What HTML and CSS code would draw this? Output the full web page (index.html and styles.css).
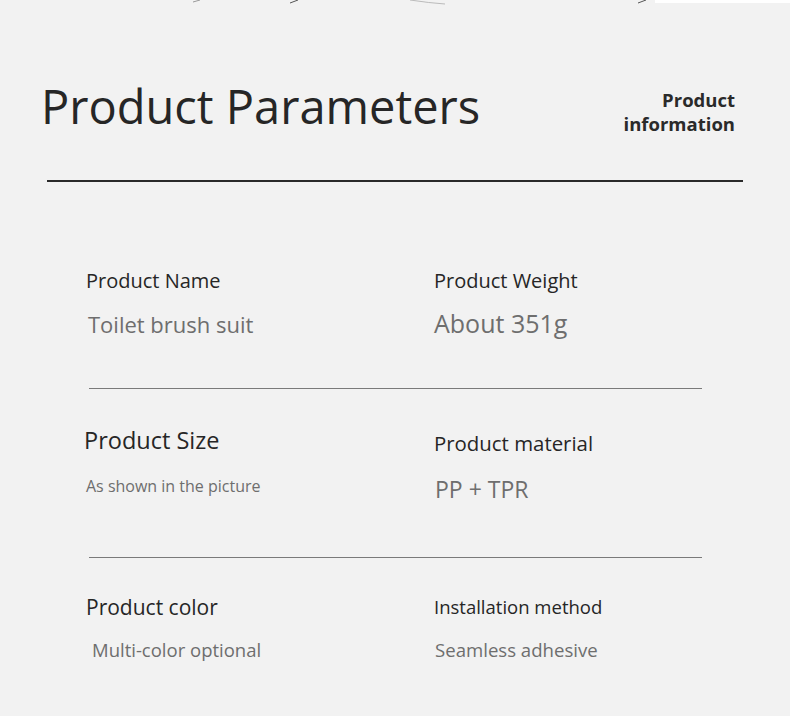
FILE: index.html
```html
<!DOCTYPE html>
<html>
<head>
<meta charset="utf-8">
<link rel="stylesheet" href="styles.css">
</head>
<body>
<div class="page">
  <svg class="topdeco" width="790" height="6" viewBox="0 0 790 6">
    <rect x="655" y="0" width="135" height="3" fill="#ffffff"/>
    <path d="M193 2 L200 0" stroke="#9a9a9a" stroke-width="1"/>
    <path d="M290 3 L298 0" stroke="#555" stroke-width="1"/>
    <path d="M410 0 Q430 3 445 4" stroke="#bbb" stroke-width="1" fill="none"/>
    <path d="M638 3 L646 0" stroke="#555" stroke-width="1"/>
  </svg>
  <header class="head">
    <h1 class="title">Product Parameters</h1>
    <div class="info">Product<br>information</div>
  </header>
  <div class="rule"></div>

  <section class="row row1">
    <div class="cell">
      <div class="label l-name">Product Name</div>
      <div class="value v-name">Toilet brush suit</div>
    </div>
    <div class="cell">
      <div class="label l-weight">Product Weight</div>
      <div class="value v-weight">About 351g</div>
    </div>
  </section>
  <div class="divider"></div>

  <section class="row row2">
    <div class="cell">
      <div class="label l-size">Product Size</div>
      <div class="value v-size">As shown in the picture</div>
    </div>
    <div class="cell">
      <div class="label l-material">Product material</div>
      <div class="value v-material">PP + TPR</div>
    </div>
  </section>
  <div class="divider"></div>

  <section class="row row3">
    <div class="cell">
      <div class="label l-color">Product color</div>
      <div class="value v-color">Multi-color optional</div>
    </div>
    <div class="cell">
      <div class="label l-install">Installation method</div>
      <div class="value v-install">Seamless adhesive</div>
    </div>
  </section>
</div>
</body>
</html>
```

FILE: styles.css
```css
* { box-sizing: border-box; margin: 0; padding: 0; }
html, body { background: #f2f2f2; }
body { font-family: "Open Sans", "Noto Sans", sans-serif; color: #262626; }
.page { position: relative; width: 790px; height: 716px; overflow: hidden; }
.topdeco { position: absolute; left: 0; top: 0; }

.head { display: flex; justify-content: space-between; align-items: flex-start; height: 131px; padding: 83px 55px 0 41px; }
.title { font-weight: 400; font-size: 47px; line-height: 47px; color: #262626; }
.info { margin-top: 5px; font-size: 18.5px; line-height: 24px; font-weight: 700; text-align: right; color: #2a2a2a; }

.rule { margin: 49px 47px 0 47px; height: 2px; background: #2a2a2a; }

.row { display: grid; grid-template-columns: 348px 1fr; padding-left: 86px; align-items: start; }
.row1 { height: 206px; padding-top: 89px; }
.row2 { height: 168px; }
.row3 { height: 158px; }
.cell { display: flex; flex-direction: column; }

.label { line-height: 1; color: #262626; white-space: nowrap; }
.value { line-height: 1; color: #6e6e6e; white-space: nowrap; }

.l-name { font-size: 20px; }
.v-name { font-size: 22px; margin-top: 22px; padding-left: 2px; }
.l-weight { font-size: 20px; }
.v-weight { font-size: 25px; margin-top: 19.5px; }

.l-size { font-size: 23.5px; margin-top: 40px; margin-left: -2px; }
.v-size { font-size: 16px; margin-top: 25px; }
.l-material { font-size: 20.4px; margin-top: 44px; }
.v-material { font-size: 23px; margin-top: 25px; padding-left: 1px; }

.l-color { font-size: 21px; margin-top: 39px; }
.v-color { font-size: 18.5px; margin-top: 23px; padding-left: 6px; }
.l-install { font-size: 18.5px; margin-top: 40px; }
.v-install { font-size: 18.6px; margin-top: 24px; padding-left: 1px; }

.divider { margin-left: 89px; width: 613px; height: 1px; background: #7a7a7a; }
```
